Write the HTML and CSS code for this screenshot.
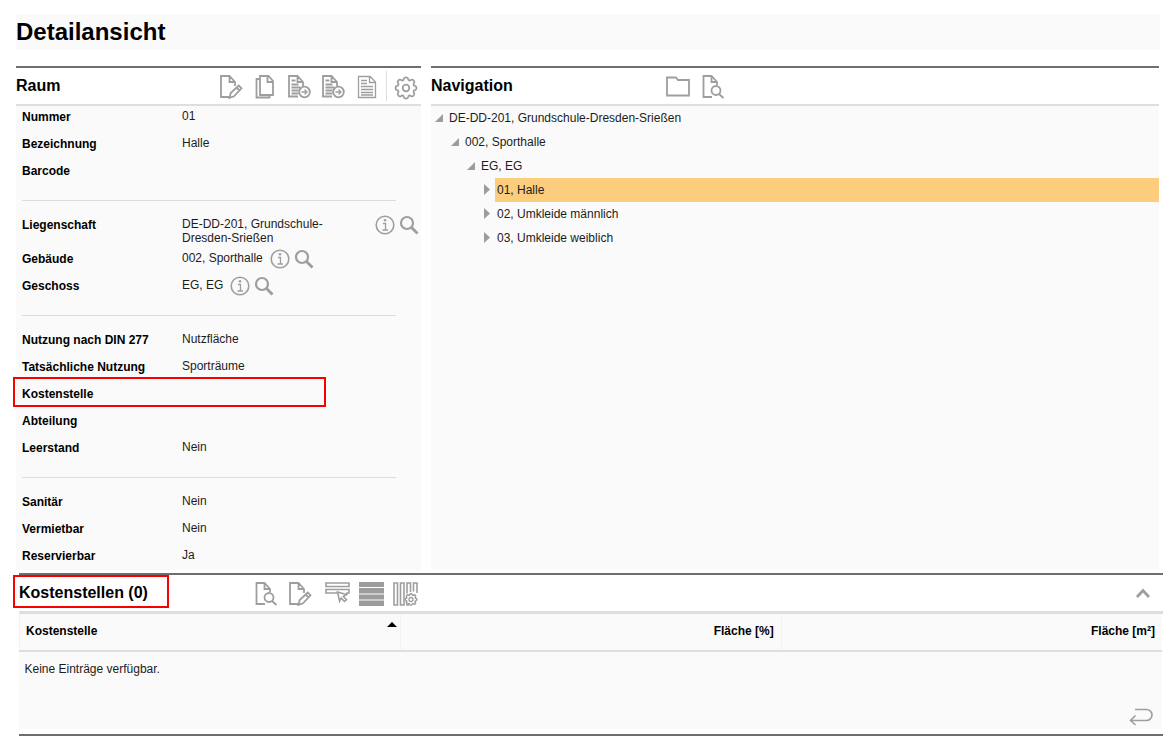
FILE: index.html
```html
<!DOCTYPE html>
<html lang="de">
<head>
<meta charset="utf-8">
<meta name="viewport" content="width=device-width, initial-scale=1">
<title>Detailansicht</title>
<link rel="stylesheet" href="styles.css">
</head>
<body>
<svg class="sprite" aria-hidden="true">
  <symbol id="edit" viewBox="0 0 24 24"><path d="M12.500 22H3V1h8.500l5.500 6v4M11.500 1v6H17M11.500 22.800l1.200-4.800 8-7.500 2.800 2.800-7.500 8zM18.500 12.500l3 3"/></symbol>
  <symbol id="copy" viewBox="0 0 24 24"><path d="M8 1h8.500L21 6v14H8zM15.500 1v6H21M8 4H4.500v18.500h13V20"/></symbol>
  <symbol id="report" viewBox="0 0 24 24"><path d="M12 21.500H3V1h8.500L17 7v4M11.500 1v6H17M5.500 5.500h4M5.500 9.500h7M5.500 12.500h9M5.500 15.500h7M5.500 18.500h7"/><circle cx="18.500" cy="17" r="5.300"/><path d="M15.500 17h5M18.500 14.500l2.500 2.500-2.500 2.500" class="thin"/></symbol>
  <symbol id="list" viewBox="0 0 24 24"><path d="M4.500 1.500H16l5.500 5.500v15.500h-17zM15.500 1.500v6h6M7 5.500h6M7 8.500h6M7 11.500h12M7 14.500h12M7 17.500h12M7 20h12" class="thin"/></symbol>
  <symbol id="gear" viewBox="0 0 24 24"><circle cx="12" cy="12" r="3.300"/><path d="M20.900 9.800a2.300 2.300 0 0 1 0 4.400A1.500 1.500 0 0 0 19.900 16.700A2.300 2.300 0 0 1 16.700 19.900A1.500 1.500 0 0 0 14.200 20.900A2.300 2.300 0 0 1 9.800 20.900A1.500 1.500 0 0 0 7.300 19.900A2.300 2.300 0 0 1 4.100 16.700A1.500 1.500 0 0 0 3.100 14.200A2.300 2.300 0 0 1 3.100 9.800A1.500 1.500 0 0 0 4.100 7.300A2.300 2.300 0 0 1 7.300 4.100A1.500 1.500 0 0 0 9.800 3.100A2.300 2.300 0 0 1 14.200 3.100A1.500 1.500 0 0 0 16.700 4.100A2.300 2.300 0 0 1 19.900 7.300A1.500 1.500 0 0 0 20.900 9.800z"/></symbol>
  <symbol id="folder" viewBox="0 0 24 24"><path d="M1 20.500V2.500h9L12 5h11v15.500z"/></symbol>
  <symbol id="search-doc" viewBox="0 0 24 24"><path d="M12 22H3.500V1h8l5.500 6v3M11.500 1v6H17M19 19l4.500 4"/><circle cx="16" cy="15.500" r="4.500"/></symbol>
  <symbol id="select-row" viewBox="0 0 25 24"><path d="M1 1h23v3.500H1zM13 11H1V7.500h23V11h-3M12.500 10l9 2.500-3.200 2 3.200 3.200-2 1.800-3.300-3.300-1.600 3z" class="medium"/></symbol>
  <symbol id="rows" viewBox="0 0 25 24"><path d="M0 0h25v5H0zM0 6h25v5.500H0zM0 12.500h25v5H0zM0 18.500h25v5.500H0z" class="solid"/></symbol>
  <symbol id="columns" viewBox="0 0 25 24"><path d="M1 1h3.500v22H1zM7.500 1H11v22H7.500zM14 11.500V1h3.500v9M20.500 9.500V1H24v10M14 22.500v.5h2" class="medium"/><circle cx="18" cy="17.500" r="2" class="thin"/><g transform="translate(11.400 10.900) scale(.55)"><path d="M20.900 9.800a2.300 2.300 0 0 1 0 4.400A1.500 1.500 0 0 0 19.900 16.700A2.300 2.300 0 0 1 16.700 19.900A1.500 1.500 0 0 0 14.200 20.900A2.300 2.300 0 0 1 9.800 20.900A1.500 1.500 0 0 0 7.300 19.900A2.300 2.300 0 0 1 4.100 16.700A1.500 1.500 0 0 0 3.100 14.200A2.300 2.300 0 0 1 3.100 9.800A1.500 1.500 0 0 0 4.100 7.300A2.300 2.300 0 0 1 7.300 4.100A1.500 1.500 0 0 0 9.800 3.100A2.300 2.300 0 0 1 14.200 3.100A1.500 1.500 0 0 0 16.700 4.100A2.300 2.300 0 0 1 19.900 7.300A1.500 1.500 0 0 0 20.900 9.800z" class="thick"/></g></symbol>
  <symbol id="info" viewBox="0 0 20 20"><circle cx="10" cy="10" r="8.800" class="medium"/><path d="M8 8.500h2.500v6.500M7.500 15h5.500" class="thin"/><circle cx="10" cy="5.200" r="1.200" class="solid"/></symbol>
  <symbol id="lens" viewBox="0 0 20 20"><circle cx="8" cy="8" r="6" class="heavy"/><path d="m12.500 12.500 6 6" class="thick"/></symbol>
  <symbol id="up" viewBox="0 0 16 12"><path d="m2 10 6-6.500 6 6.500" class="thick"/></symbol>
  <symbol id="return" viewBox="0 0 24 18"><path d="M6 1.500h11.500a5.500 5.500 0 0 1 0 11H1.500M6.500 7.500l-5 5 5 4.500" class="medium"/></symbol>
  <symbol id="opened" viewBox="0 0 8 8"><path d="M8 0v8H0z" class="solid"/></symbol>
  <symbol id="closed" viewBox="0 0 8 12"><path d="M1 0 7 5.500l-6 5.500z" class="solid"/></symbol>
</svg>

<div class="page">
  <header class="title-bar"><h1>Detailansicht</h1></header>

  <div class="columns">
    <section class="panel">
      <div class="panel-head room-head">
        <h2>Raum</h2>
        <div class="tools">
          <button type="button" aria-label="Bearbeiten"><svg><use href="#edit"/></svg></button>
          <button type="button" aria-label="Kopieren"><svg><use href="#copy"/></svg></button>
          <button type="button" aria-label="Bericht öffnen"><svg><use href="#report"/></svg></button>
          <button type="button" aria-label="Bericht exportieren"><svg><use href="#report"/></svg></button>
          <button type="button" aria-label="Dokument"><svg><use href="#list"/></svg></button>
        </div>
        <div class="tools settings">
          <button type="button" aria-label="Einstellungen"><svg><use href="#gear"/></svg></button>
        </div>
      </div>
      <div class="panel-body">
        <dl class="fields">
          <div class="field"><dt>Nummer</dt><dd>01</dd></div>
          <div class="field"><dt>Bezeichnung</dt><dd>Halle</dd></div>
          <div class="field"><dt>Barcode</dt><dd></dd></div>
        </dl>
        <hr>
        <dl class="fields">
          <div class="field"><dt>Liegenschaft</dt><dd><span>DE-DD-201, Grundschule-Dresden-Srießen</span><span class="links"><button type="button" aria-label="Info"><svg><use href="#info"/></svg></button><button type="button" aria-label="Suchen"><svg><use href="#lens"/></svg></button></span></dd></div>
          <div class="field"><dt>Gebäude</dt><dd><span>002, Sporthalle</span><span class="links"><button type="button" aria-label="Info"><svg><use href="#info"/></svg></button><button type="button" aria-label="Suchen"><svg><use href="#lens"/></svg></button></span></dd></div>
          <div class="field"><dt>Geschoss</dt><dd><span>EG, EG</span><span class="links"><button type="button" aria-label="Info"><svg><use href="#info"/></svg></button><button type="button" aria-label="Suchen"><svg><use href="#lens"/></svg></button></span></dd></div>
        </dl>
        <hr>
        <dl class="fields">
          <div class="field"><dt>Nutzung nach DIN 277</dt><dd>Nutzfläche</dd></div>
          <div class="field"><dt>Tatsächliche Nutzung</dt><dd>Sporträume</dd></div>
          <div class="field marked"><dt>Kostenstelle</dt><dd></dd></div>
          <div class="field"><dt>Abteilung</dt><dd></dd></div>
          <div class="field"><dt>Leerstand</dt><dd>Nein</dd></div>
        </dl>
        <hr>
        <dl class="fields last">
          <div class="field"><dt>Sanitär</dt><dd>Nein</dd></div>
          <div class="field"><dt>Vermietbar</dt><dd>Nein</dd></div>
          <div class="field"><dt>Reservierbar</dt><dd>Ja</dd></div>
        </dl>
      </div>
    </section>

    <section class="panel">
      <div class="panel-head nav-head">
        <h2>Navigation</h2>
        <div class="tools">
          <button type="button" aria-label="Ordner"><svg><use href="#folder"/></svg></button>
          <button type="button" aria-label="Suchen"><svg><use href="#search-doc"/></svg></button>
        </div>
      </div>
      <nav class="panel-body">
        <ul class="tree">
          <li><a href="#"><svg><use href="#opened"/></svg><span>DE-DD-201, Grundschule-Dresden-Srießen</span></a>
            <ul>
              <li><a href="#"><svg><use href="#opened"/></svg><span>002, Sporthalle</span></a>
                <ul>
                  <li><a href="#"><svg><use href="#opened"/></svg><span>EG, EG</span></a>
                    <ul>
                      <li><a href="#" class="current"><svg class="shut"><use href="#closed"/></svg><span>01, Halle</span></a></li>
                      <li><a href="#"><svg class="shut"><use href="#closed"/></svg><span>02, Umkleide männlich</span></a></li>
                      <li><a href="#"><svg class="shut"><use href="#closed"/></svg><span>03, Umkleide weiblich</span></a></li>
                    </ul>
                  </li>
                </ul>
              </li>
            </ul>
          </li>
        </ul>
      </nav>
    </section>
  </div>

  <section class="costs">
    <div class="panel-head costs-head">
      <h2>Kostenstellen (0)</h2>
      <div class="tools">
        <button type="button" aria-label="Suchen"><svg><use href="#search-doc"/></svg></button>
        <button type="button" aria-label="Bearbeiten"><svg><use href="#edit"/></svg></button>
      </div>
      <div class="tools wide">
        <button type="button" aria-label="Zeile auswählen"><svg><use href="#select-row"/></svg></button>
        <button type="button" aria-label="Zeilen"><svg><use href="#rows"/></svg></button>
        <button type="button" aria-label="Spalten einstellen"><svg><use href="#columns"/></svg></button>
      </div>
      <button type="button" class="collapse" aria-label="Einklappen"><svg><use href="#up"/></svg></button>
    </div>
    <div class="costs-body">
      <table>
        <thead><tr><th scope="col" class="sorted">Kostenstelle</th><th scope="col">Fläche [%]</th><th scope="col">Fläche [m²]</th></tr></thead>
        <tbody><tr><td colspan="3">Keine Einträge verfügbar.</td></tr></tbody>
      </table>
      <button type="button" class="back" aria-label="Zurück"><svg><use href="#return"/></svg></button>
    </div>
  </section>
</div>
</body>
</html>
```
FILE: styles.css
```css
*, *::before, *::after { box-sizing: border-box; }

body {
  margin: 0;
  background: #fff;
  color: #1c1c1c;
  font: 12px/14px "Liberation Sans", Arial, sans-serif;
}

h1, h2, dl, dd, ul { margin: 0; padding: 0; }
h1, h2 { color: #000; font-weight: bold; }
h1 { font-size: 24px; line-height: 36px; }
h2 { font-size: 16px; line-height: 20px; }

button {
  display: block;
  padding: 0;
  border: 0;
  background: none;
  cursor: pointer;
}

svg {
  display: block;
  overflow: visible;
  fill: none;
  stroke: #9e9e9e;
  stroke-width: 1.8;
}
symbol { overflow: visible; }
.sprite { position: absolute; width: 0; height: 0; }
.thin { stroke-width: 1.3; }
.medium { stroke-width: 1.6; }
.heavy { stroke-width: 2.2; }
.thick { stroke-width: 2.8; }
.solid { fill: #9c9c9c; stroke: none; }

.page { padding: 14px 2px 2px 16px; }

.title-bar { margin-right: 3px; background: #fafafa; }

.columns {
  display: grid;
  grid-template-columns: 405px 1fr;
  gap: 10px;
  margin: 16px 4px 3px 0;
}

.panel { display: flex; flex-direction: column; }

.panel-head {
  display: grid;
  align-items: center;
  height: 40px;
  border-top: 2px solid #6e6e6e;
  border-bottom: 2px solid #dedede;
}
.room-head { grid-template-columns: 202px 1fr 35px; }
.nav-head { grid-template-columns: 235px 1fr; }

.tools { display: flex; gap: 10px; padding-top: 2px; }
.tools svg { width: 24px; height: 24px; }
.settings {
  height: 30px;
  padding: 3px 0 0 7px;
  border-left: 1px solid #dedede;
}

.panel-body { flex: 1; background: #fafafa; }

.fields { padding-left: 6px; }
.field {
  display: grid;
  grid-template-columns: 160px 1fr;
  min-height: 27px;
}
.last .field:last-child { min-height: 25px; }
dt { padding-top: 4px; color: #000; font-weight: bold; }
dd { display: flex; gap: 7px; padding: 3px 2px 3px 0; }

.links { display: flex; gap: 4px; height: 20px; margin: -2px 0 -4px; }
.links svg { width: 20px; height: 20px; }

hr {
  height: 1px;
  margin: 13px 25px 13px 6px;
  border: 0;
  background: #dcdcdc;
}

.marked { position: relative; }
.marked::after,
.costs-head h2::after {
  content: "";
  position: absolute;
  border: 2px solid #f80000;
  pointer-events: none;
}
.marked::after { top: -6px; left: -9px; width: 313px; height: 30px; }

.tree, .tree ul { list-style: none; }
.tree ul { padding-left: 16px; }
.tree a {
  display: grid;
  grid-template-columns: 12px 1fr;
  align-items: center;
  height: 24px;
  color: #1c1c1c;
  text-decoration: none;
}
.tree { padding-left: 4px; }
.tree svg { width: 8px; height: 8px; }
.tree .shut { width: 8px; height: 12px; }
.tree span { padding-left: 2px; line-height: 24px; }
.current span { background: #fbcd7c; }

.costs { margin-left: 3px; border-bottom: 2px solid #6e6e6e; }
.costs-head {
  grid-template-columns: 234px 72px 1fr auto;
  height: 41px;
  border-bottom-width: 3px;
}
.costs-head h2 { position: relative; }
.costs-head h2::after { top: -8px; left: -6px; width: 156px; height: 33px; }
.wide { gap: 9px; }
.wide svg { width: 25px; height: 24px; }
.collapse { margin-right: 12px; }
.collapse svg { width: 16px; height: 12px; }

.costs-body {
  display: flex;
  flex-direction: column;
  min-height: 115px;
  margin: 0 1px 5px 0;
  background: #fafafa;
}
table { width: 100%; border-collapse: collapse; table-layout: fixed; }
th {
  height: 37px;
  padding: 0 7px 2px 6px;
  border-bottom: 2px solid #dedede;
  border-left: 1px solid #f2f2f2;
  color: #000;
  text-align: right;
}
th.sorted { position: relative; text-align: left; }
.sorted::after {
  content: "";
  position: absolute;
  top: 8px;
  right: 3px;
  border: 5px solid transparent;
  border-top: 0;
  border-bottom-color: #000;
}
td { padding: 10px 5px; }
.back { align-self: flex-end; margin: auto 9px 3px auto; }
.back svg { width: 24px; height: 18px; }
```
